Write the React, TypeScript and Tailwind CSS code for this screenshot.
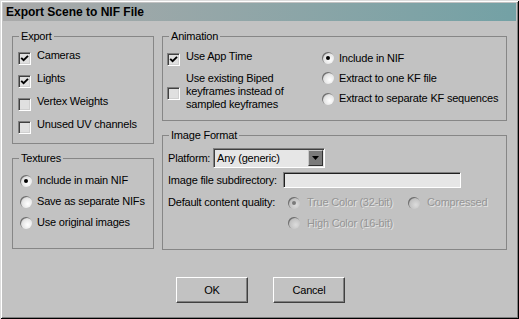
import React from 'react';

const Check = ({ checked }: { checked?: boolean }) => (
  <span className="mt-[3px] flex h-[13px] w-[13px] shrink-0 items-center justify-center border border-t-[#808080] border-l-[#808080] border-b-white border-r-white bg-[#e0e0e0] shadow-[inset_1px_1px_0_#404040,inset_-1px_-1px_0_#d0d0d0]">
    {checked && (
      <svg width="9" height="9" viewBox="0 0 9 9">
        <path d="M1.2 3.8 L3.6 6.2 L8 1.8" stroke="#000" strokeWidth="1.9" fill="none" />
      </svg>
    )}
  </span>
);

const Radio = ({ checked, disabled }: { checked?: boolean; disabled?: boolean }) => (
  <span
    className={`flex h-[12px] w-[12px] shrink-0 items-center justify-center rounded-full shadow-[inset_1px_1px_0_#6e6e6e] ${
      disabled
        ? 'bg-[radial-gradient(circle_at_65%_65%,#dcdcdc_0%,#c4c4c4_50%,#a8a8a8_100%)]'
        : 'bg-[radial-gradient(circle_at_65%_65%,#ffffff_0%,#e8e8e8_45%,#b4b4b4_100%)]'
    }`}
  >
    {checked && <span className={`h-[4px] w-[4px] rounded-full ${disabled ? 'bg-[#7a7a7a]' : 'bg-black'}`} />}
  </span>
);

// group box: the padding goes on the inner div so the legend stays put
const Group = ({ title, className, body, children }: { title: string; className: string; body: string; children: React.ReactNode }) => (
  <fieldset className={`border border-[#868686] ${className}`}>
    <legend className="ml-[6px] px-[2px] leading-[13px]">{title}</legend>
    <div className={body}>{children}</div>
  </fieldset>
);

const CheckRow = ({ label, checked }: { label: string; checked?: boolean }) => (
  <div className="flex h-[23px] items-start gap-[6px]">
    <Check checked={checked} />
    <span className="leading-[13px]">{label}</span>
  </div>
);

const RadioRow = ({ label, checked }: { label: string; checked?: boolean }) => (
  <div className="flex h-[21px] items-center gap-[5px]">
    <Radio checked={checked} />
    <span className="leading-[13px]">{label}</span>
  </div>
);

const disabledText = 'text-[#959595] [text-shadow:1px_1px_0_#e4e4e4]';

const Button = ({ label }: { label: string }) => (
  <button className="flex h-[26px] w-[72px] items-center justify-center border border-t-white border-l-white border-b-[#404040] border-r-[#404040] bg-[#c2c2c2] shadow-[inset_-1px_-1px_0_#808080]">
    {label}
  </button>
);

export default function App() {
  return (
    <div className="h-[319px] w-[519px] bg-[#c2c2c2] p-[3px] font-['Liberation_Sans',Arial,sans-serif] text-[11px] tracking-[-0.2px] text-black shadow-[inset_1px_1px_0_#dcdcdc,inset_-1px_-1px_0_#000,inset_2px_2px_0_#fff,inset_-2px_-2px_0_#808080]">
      <div className="flex h-[18px] items-center bg-linear-to-r from-[#aaaaaa] to-[#73a1a5] pl-[3px] text-[12px] font-bold tracking-normal">
        Export Scene to NIF File
      </div>

      <div className="flex gap-[8px] pl-[9px] pt-[9px]">
        {/* left column */}
        <div className="flex w-[142px] flex-col gap-[8px]">
          <Group title="Export" className="h-[114px]" body="pl-[5px] pt-[6px]">
            <CheckRow label="Cameras" checked />
            <CheckRow label="Lights" checked />
            <CheckRow label="Vertex Weights" />
            <CheckRow label="Unused UV channels" />
          </Group>
          <Group title="Textures" className="h-[97px]" body="pl-[7px] pt-[5px]">
            <RadioRow label="Include in main NIF" checked />
            <RadioRow label="Save as separate NIFs" />
            <RadioRow label="Use original images" />
          </Group>
        </div>

        {/* right column */}
        <div className="flex w-[345px] flex-col gap-[8px]">
          <Group title="Animation" className="h-[91px]" body="flex pl-[4px] pt-[5px]">
            <div className="w-[155px] pt-[2px]">
              <div className="flex h-[22px] items-start gap-[6px]">
                <Check checked />
                <span className="leading-[13px]">Use App Time</span>
              </div>
              <div className="flex items-center gap-[6px]">
                <Check />
                <span className="leading-[13px]">
                  Use existing Biped
                  <br />
                  keyframes instead of
                  <br />
                  sampled keyframes
                </span>
              </div>
            </div>
            <div className="flex flex-col">
              <div className="flex h-[20px] items-center gap-[5px]">
                <Radio checked />
                <span>Include in NIF</span>
              </div>
              <div className="flex h-[20px] items-center gap-[5px]">
                <Radio />
                <span>Extract to one KF file</span>
              </div>
              <div className="flex h-[21px] items-center gap-[5px]">
                <Radio />
                <span>Extract to separate KF sequences</span>
              </div>
            </div>
          </Group>

          <Group title="Image Format" className="h-[121px]" body="pl-[5px] pt-[6px]">
            <div className="flex h-[20px] items-center">
              <span className="w-[45px]">Platform:</span>
              <div className="flex h-[20px] w-[112px] items-center justify-between border border-t-[#808080] border-l-[#808080] border-b-white border-r-white bg-[#e6e6e6] pl-[3px] pr-[1px] shadow-[inset_1px_1px_0_#404040]">
                <span>Any (generic)</span>
                <span className="flex h-[16px] w-[15px] items-center justify-center border border-t-[#c8c8c8] border-l-[#c8c8c8] border-b-[#303030] border-r-[#303030] bg-[#7a7a7a]">
                  <svg width="7" height="4" viewBox="0 0 7 4">
                    <path d="M0 0 H7 L3.5 4 Z" fill="#000" />
                  </svg>
                </span>
              </div>
            </div>
            <div className="mt-[4px] flex h-[16px] items-center">
              <span className="w-[115px]">Image file subdirectory:</span>
              <div className="h-[16px] w-[178px] border border-t-[#808080] border-l-[#808080] border-b-white border-r-white bg-[#e6e6e6] shadow-[inset_1px_1px_0_#202020]" />
            </div>
            <div className="mt-[4px] flex h-[21px] items-center">
              <span className="w-[120px]">Default content quality:</span>
              <div className="flex w-[120px] items-center gap-[7px]">
                <Radio checked disabled />
                <span className={disabledText}>True Color (32-bit)</span>
              </div>
              <div className="flex items-center gap-[7px]">
                <Radio disabled />
                <span className={disabledText}>Compressed</span>
              </div>
            </div>
            <div className="ml-[120px] flex h-[20px] items-center gap-[7px]">
              <Radio disabled />
              <span className={disabledText}>High Color (16-bit)</span>
            </div>
          </Group>
        </div>
      </div>

      <div className="mt-[27px] flex justify-center gap-[25px] pl-[2px]">
        <Button label="OK" />
        <Button label="Cancel" />
      </div>
    </div>
  );
}
